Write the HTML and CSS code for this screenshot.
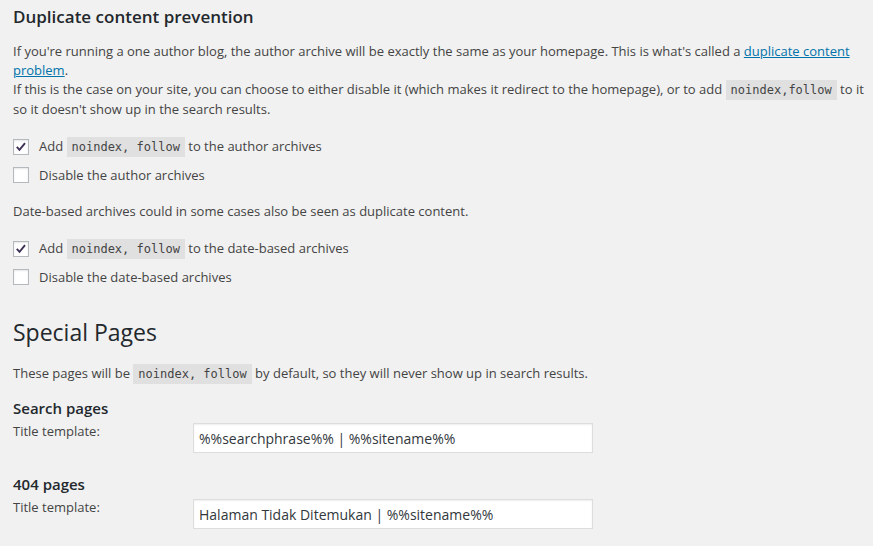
FILE: index.html
```html
<!DOCTYPE html>
<html lang="en">
<head>
  <meta charset="UTF-8">
  <title>Titles &amp; Metas - Archives</title>
  <link rel="stylesheet" href="styles.css">
</head>
<body>
  <div class="wrap">
    <h2 class="section-title">Duplicate content prevention</h2>
    <p class="intro">If you're running a one author blog, the author archive will be exactly the same as your homepage. This is what's called a <a href="#">duplicate content problem</a>.<br>
      If this is the case on your site, you can choose to either disable it (which makes it redirect to the homepage), or to add <code>noindex,follow</code> to it so it doesn't show up in the search results.</p>

    <div class="options">
      <label class="check-row">
        <span class="cb checked"><svg viewBox="0 0 16 16" width="16" height="16"><path d="M3.2 7.8 L6.3 11.2 L12.6 3.6" /></svg></span>
        <span>Add <code>noindex, follow</code> to the author archives</span>
      </label>
      <label class="check-row">
        <span class="cb"></span>
        <span>Disable the author archives</span>
      </label>
    </div>

    <p class="note">Date-based archives could in some cases also be seen as duplicate content.</p>

    <div class="options">
      <label class="check-row">
        <span class="cb checked"><svg viewBox="0 0 16 16" width="16" height="16"><path d="M3.2 7.8 L6.3 11.2 L12.6 3.6" /></svg></span>
        <span>Add <code>noindex, follow</code> to the date-based archives</span>
      </label>
      <label class="check-row">
        <span class="cb"></span>
        <span>Disable the date-based archives</span>
      </label>
    </div>

    <h1 class="page-title">Special Pages</h1>
    <p class="note">These pages will be <code>noindex, follow</code> by default, so they will never show up in search results.</p>

    <h3 class="sub-title">Search pages</h3>
    <div class="field">
      <label class="field-label" for="search-title">Title template:</label>
      <input id="search-title" class="text-input" type="text" value="%%searchphrase%% | %%sitename%%">
    </div>

    <h3 class="sub-title second">404 pages</h3>
    <div class="field">
      <label class="field-label" for="404-title">Title template:</label>
      <input id="404-title" class="text-input" type="text" value="Halaman Tidak Ditemukan | %%sitename%%">
    </div>
  </div>
</body>
</html>
```

FILE: styles.css
```css
body {
  margin: 0;
  background: #f1f1f1;
  color: #444;
  font-family: "Open Sans", sans-serif;
  font-size: 13px;
  line-height: 19px;
}

.wrap {
  padding: 0 4px 0 13px;
}

.section-title {
  margin: 6px 0 0;
  font-size: 17px;
  line-height: 22px;
  font-weight: 600;
  color: #23282d;
}

.intro {
  margin: 14px 0 0;
}

a {
  color: #0073aa;
}

code {
  background: rgba(0, 0, 0, 0.07);
  font-family: "DejaVu Sans Mono", monospace;
  font-size: 12px;
  padding: 3px 5px 3px;
  color: #444;
}

.options {
  margin-top: 18px;
  display: flex;
  flex-direction: column;
  gap: 8px;
}

.check-row {
  display: flex;
  align-items: center;
  height: 20px;
}

.cb {
  width: 14px;
  height: 14px;
  border: 1px solid #b4b9be;
  background: #fff;
  box-shadow: inset 0 1px 2px rgba(0, 0, 0, 0.1);
  margin-right: 10px;
  display: flex;
  align-items: center;
  justify-content: center;
  flex-shrink: 0;
}

.cb svg {
  width: 14px;
  height: 14px;
}

.cb path {
  fill: none;
  stroke: #3e3158;
  stroke-width: 2.2;
}

.note {
  margin: 17px 0 0;
}

.page-title {
  margin: 31px 0 0;
  font-size: 23px;
  line-height: 29px;
  font-weight: 400;
  color: #23282d;
}

.sub-title {
  margin: 15px 0 0;
  font-size: 15px;
  line-height: 19px;
  font-weight: 600;
  color: #23282d;
}

.sub-title.second {
  margin-top: 22px;
}

.field {
  display: flex;
  align-items: flex-start;
  margin-top: 4px;
}

.field-label {
  width: 180px;
  flex-shrink: 0;
}

.text-input {
  width: 400px;
  height: 30px;
  box-sizing: border-box;
  border: 1px solid #ddd;
  box-shadow: inset 0 1px 2px rgba(0, 0, 0, 0.07);
  background: #fff;
  color: #32373c;
  font-family: "Open Sans", sans-serif;
  font-size: 14px;
  padding: 3px 5px;
  margin: 1px 0 0;
  outline: none;
}
```
